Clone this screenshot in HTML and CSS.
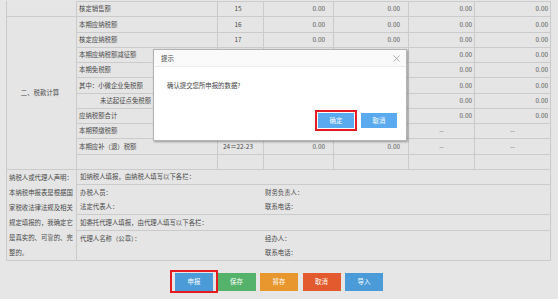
FILE: index.html
```html
<!DOCTYPE html>
<html lang="zh-CN">
<head>
<meta charset="utf-8">
<title>申报</title>
<link rel="stylesheet" href="styles.css">
</head>
<body>
<div class="page">
  <div class="sheet">
    <div class="c first"></div>
    <div class="c lbl top">核定销售额</div>
    <div class="c num top">15</div>
    <div class="c val top">0.00</div>
    <div class="c val top">0.00</div>
    <div class="c val2 top">0.00</div>
    <div class="c val2 top">0.00</div>

    <div class="c sec r10">二、税款计算</div>
    <div class="c lbl">本期应纳税额</div>
    <div class="c num">16</div>
    <div class="c val">0.00</div>
    <div class="c val">0.00</div>
    <div class="c val2">0.00</div>
    <div class="c val2">0.00</div>

    <div class="c lbl">核定应纳税额</div>
    <div class="c num">17</div>
    <div class="c val">0.00</div>
    <div class="c val">0.00</div>
    <div class="c val2">0.00</div>
    <div class="c val2">0.00</div>

    <div class="c lbl">本期应纳税额减征额</div>
    <div class="c num"></div>
    <div class="c val"></div>
    <div class="c val"></div>
    <div class="c val2">0.00</div>
    <div class="c val2">0.00</div>

    <div class="c lbl">本期免税额</div>
    <div class="c num"></div>
    <div class="c val"></div>
    <div class="c val"></div>
    <div class="c val2">0.00</div>
    <div class="c val2">0.00</div>

    <div class="c lbl">其中：小微企业免税额</div>
    <div class="c num"></div>
    <div class="c val"></div>
    <div class="c val"></div>
    <div class="c val2">0.00</div>
    <div class="c val2">0.00</div>

    <div class="c lbl indent">未达起征点免税额</div>
    <div class="c num"></div>
    <div class="c val"></div>
    <div class="c val"></div>
    <div class="c val2">0.00</div>
    <div class="c val2">0.00</div>

    <div class="c lbl">应纳税额合计</div>
    <div class="c num"></div>
    <div class="c val"></div>
    <div class="c val"></div>
    <div class="c val2">0.00</div>
    <div class="c val2">0.00</div>

    <div class="c lbl">本期预缴税额</div>
    <div class="c num"></div>
    <div class="c val"></div>
    <div class="c val"></div>
    <div class="c dash">--</div>
    <div class="c dash">--</div>

    <div class="c lbl">本期应补（退）税额</div>
    <div class="c num">24＝22-23</div>
    <div class="c val">0.00</div>
    <div class="c val">0.00</div>
    <div class="c dash">--</div>
    <div class="c dash">--</div>

    <div class="c lbl"></div>
    <div class="c num"></div>
    <div class="c val"></div>
    <div class="c val"></div>
    <div class="c val2"></div>
    <div class="c val2"></div>

    <div class="c decl r6">纳税人或代理人声明：<br>本纳税申报表是根据国<br>家税收法律法规及相关<br>规定填报的，我确定它<br>是真实的、可靠的、完<br>整的。</div>
    <div class="c txt s6">如纳税人填报，由纳税人填写以下各栏：</div>
    <div class="c txt s2 nb nr">办税人员：</div>
    <div class="c txt2 s4 nb">财务负责人：</div>
    <div class="c txt s2 nr">法定代表人：</div>
    <div class="c txt2 s4">联系电话：</div>
    <div class="c txt s6">如委托代理人填报，由代理人填写以下各栏：</div>
    <div class="c txt s2 nb nr">代理人名称（公章）：</div>
    <div class="c txt2 s4 nb">经办人：</div>
    <div class="c txt s2 nr"></div>
    <div class="c txt2 s4">联系电话：</div>
  </div>

  <div class="actions">
    <button class="btn blue mark">申报</button>
    <button class="btn green">保存</button>
    <button class="btn orange">暂存</button>
    <button class="btn red">取消</button>
    <button class="btn blue">导入</button>
  </div>

  <div class="dialog">
    <div class="dlg-head">
      <span>提示</span>
      <svg class="close" width="7" height="7" viewBox="0 0 7 7"><path d="M0.5 0.5 L6.5 6.5 M6.5 0.5 L0.5 6.5" stroke="#9a9a9a" stroke-width="0.8" fill="none"/></svg>
    </div>
    <div class="dlg-body">确认提交您所申报的数据?</div>
    <div class="dlg-foot">
      <button class="dbtn mark2">确定</button>
      <button class="dbtn">取消</button>
    </div>
  </div>
</div>
</body>
</html>
```

FILE: styles.css
```css
* { box-sizing: border-box; }
html, body {
  margin: 0;
  padding: 0;
  background: #e6e6e6;
}
body {
  font-family: "Noto Sans CJK SC", "Noto Sans", sans-serif;
  font-size: 6.4px;
  color: #4a4a4a;
  width: 558px;
  height: 299px;
  overflow: hidden;
}
.page {
  position: relative;
  padding: 1px 0 0 6px;
}
.sheet {
  display: grid;
  width: 546px;
  grid-template-columns: 70px 141px 46px 70px 75px 66px 76px;
  grid-template-rows: 16px 16px 15px 15px 15px 16px 15px 15px 15px 16px 15px 15px 15px 15px 16px 15px 15px;
  border-left: 1px solid #cbcbcb;
  background: #e5e5e5;
}
.c {
  border-right: 1px solid #cbcbcb;
  border-bottom: 1px solid #cbcbcb;
  display: flex;
  align-items: center;
  white-space: nowrap;
  overflow: hidden;
  line-height: 14px;
}
.c.top { border-top: 1px solid #cbcbcb; }
.r10 { grid-row: span 10; }
.r6 { grid-row: span 6; }
.s2 { grid-column: span 2; }
.s4 { grid-column: span 4; }
.s6 { grid-column: span 6; }
.nb { border-bottom: none; }
.nr { border-right: none; }

.lbl { padding-left: 2px; }
.indent { padding-left: 23px; }
.num { justify-content: center; padding-right: 5px; }
.val { justify-content: flex-end; padding-right: 8px; color: #555; }
.val2 { justify-content: flex-end; padding-right: 2px; color: #555; }
.dash { justify-content: center; color: #666; }
.sec { justify-content: center; padding-right: 3px; }
.decl {
  align-items: flex-start;
  padding: 0 0 0 2px;
  line-height: 15px;
  color: #4a4a4a;
}
.txt { padding-left: 3px; }
.txt2 { padding-left: 1px; }

.actions {
  display: flex;
  gap: 4.5px;
  margin: 12px 0 0 169px;
}
.btn {
  width: 38px;
  height: 18px;
  border: none;
  padding: 0;
  margin: 0;
  color: #fff;
  font-family: inherit;
  font-size: 6.4px;
  line-height: 18px;
}
.blue { background: #4b9bd9; }
.green { background: #55b26b; }
.orange { background: #e8972f; }
.red { background: #e35a2f; }
.mark { position: relative; }
.mark::after {
  content: "";
  position: absolute;
  left: -5px;
  right: -5px;
  top: -3px;
  bottom: -2px;
  border: 2px solid #e51b22;
}

.dialog {
  position: absolute;
  left: 153px;
  top: 49px;
  width: 254px;
  height: 92px;
  background: #fff;
  border: 1px solid #b3b3b3;
  box-shadow: 1px 1px 2px rgba(0, 0, 0, 0.35);
  display: flex;
  flex-direction: column;
  color: #444;
}
.dlg-head {
  height: 17px;
  border-bottom: 1px solid #ececec;
  background: #fafafa;
  display: flex;
  align-items: center;
  justify-content: space-between;
  padding: 0 6px 0 7px;
}
.close { display: block; }
.dlg-body {
  padding: 14px 0 0 13px;
  height: 46px;
}
.dlg-foot {
  display: flex;
  justify-content: flex-end;
  gap: 7px;
  padding-right: 9px;
}
.dbtn {
  width: 36px;
  height: 15px;
  border: none;
  padding: 0;
  margin: 0;
  background: #5aaaef;
  color: #fff;
  font-family: inherit;
  font-size: 6.4px;
  line-height: 15px;
}
.mark2 { position: relative; }
.mark2::after {
  content: "";
  position: absolute;
  left: -3px;
  right: -3px;
  top: -3px;
  bottom: -3px;
  border: 2px solid #e51b22;
}
```
